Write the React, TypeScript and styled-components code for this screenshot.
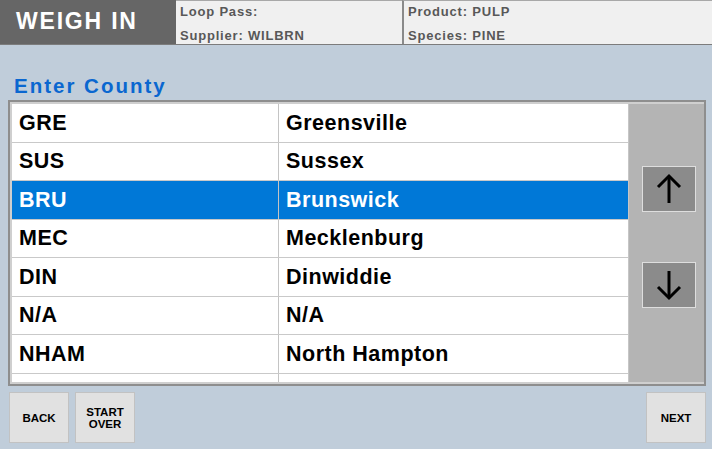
import React, { useState } from 'react';
import styled, { createGlobalStyle } from 'styled-components';

const GlobalStyle = createGlobalStyle`
  html, body {
    margin: 0;
    padding: 0;
    width: 712px;
    height: 449px;
    overflow: hidden;
    background: #c0cdda;
    font-family: 'Liberation Sans', Arial, sans-serif;
  }
  * { box-sizing: border-box; }
`;

interface County {
  code: string;
  name: string;
}

const counties: County[] = [
  { code: 'GRE', name: 'Greensville' },
  { code: 'SUS', name: 'Sussex' },
  { code: 'BRU', name: 'Brunswick' },
  { code: 'MEC', name: 'Mecklenburg' },
  { code: 'DIN', name: 'Dinwiddie' },
  { code: 'N/A', name: 'N/A' },
  { code: 'NHAM', name: 'North Hampton' },
];

const Screen = styled.div`
  width: 712px;
  height: 449px;
  display: flex;
  flex-direction: column;
  background: #c0cdda;
`;

const Header = styled.div`
  display: flex;
  height: 45px;
  border-bottom: 1px solid #7c7c7c;
`;

const TitleBlock = styled.div`
  width: 176px;
  background: #666666;
  display: flex;
  align-items: center;
  padding: 0 0 2px 16px;
  color: #ffffff;
  font-size: 23px;
  font-weight: 700;
  letter-spacing: 1.8px;
`;

const InfoCell = styled.div<{ $width: number; $divider?: boolean }>`
  width: ${({ $width }) => $width}px;
  background: #f0f0f0;
  border-top: 1px solid #a8a8a8;
  border-left: ${({ $divider }) => ($divider ? '2px solid #8a8a8a' : 'none')};
  display: flex;
  flex-direction: column;
  gap: 9px;
  padding: 3px 0 0 4px;
`;

const InfoLine = styled.div`
  font-size: 13px;
  line-height: 15px;
  font-weight: 700;
  color: #585858;
  letter-spacing: 0.8px;
`;

const Body = styled.div`
  flex: 1;
  display: flex;
  flex-direction: column;
  padding: 0 6px 0 8px;
`;

const SectionTitle = styled.h2`
  margin: 0;
  padding: 30px 0 0 6px;
  height: 55px;
  font-size: 20.5px;
  line-height: 22px;
  font-weight: 700;
  color: #0a67d0;
  letter-spacing: 2px;
`;

const ListFrame = styled.div`
  height: 286px;
  border: 2px solid #8e8e8e;
  padding: 2px 0 2px 2px;
  background: #cfcfcf;
  display: flex;
`;

const Rows = styled.div`
  flex: 1;
  background: #ffffff;
  overflow: hidden;
`;

const Row = styled.div<{ $selected?: boolean }>`
  display: grid;
  grid-template-columns: 267px 1fr;
  height: 38.5px;
  border-bottom: 1px solid #c9c9c9;
  background: ${({ $selected }) => ($selected ? '#0078d7' : '#ffffff')};
  color: ${({ $selected }) => ($selected ? '#ffffff' : '#000000')};
  cursor: pointer;
`;

const Cell = styled.div<{ $first?: boolean }>`
  display: flex;
  align-items: center;
  padding-left: 7px;
  padding-top: 1px;
  font-size: 21.5px;
  font-weight: 700;
  letter-spacing: 0.5px;
  border-right: ${({ $first }) => ($first ? '1px solid #c4c4c4' : 'none')};
  white-space: nowrap;
`;

const ScrollPanel = styled.div`
  width: 76px;
  background: #b4b4b4;
  border-left: 1px solid #c6c6c6;
  display: flex;
  flex-direction: column;
  align-items: flex-start;
  padding: 62px 0 0 13px;
  gap: 50px;
`;

const ArrowButton = styled.button`
  width: 54px;
  height: 46px;
  padding: 0;
  background: #8b8b8b;
  border: 1px solid #dedede;
  display: flex;
  align-items: center;
  justify-content: center;
  cursor: pointer;
`;

const Footer = styled.div`
  display: flex;
  gap: 6px;
  padding: 6px 0 0 1px;
`;

const NavButton = styled.button<{ $push?: boolean }>`
  width: 60px;
  height: 51px;
  margin-left: ${({ $push }) => ($push ? 'auto' : '0')};
  background: #e1e1e1;
  border: 1px solid #c2c2c2;
  font-family: 'Liberation Sans', Arial, sans-serif;
  font-size: 11.5px;
  line-height: 12px;
  font-weight: 700;
  color: #000000;
  padding: 0;
  cursor: pointer;
`;

const Arrow: React.FC<{ down?: boolean }> = ({ down }) => (
  <svg width="26" height="32" viewBox="0 0 26 32" style={{ transform: down ? 'rotate(180deg)' : undefined }}>
    <path d="M13 3 V30" stroke="#000" strokeWidth="3" fill="none" />
    <path d="M2 14 L13 3 L24 14" stroke="#000" strokeWidth="3" fill="none" strokeLinejoin="miter" />
  </svg>
);

export default function App() {
  const [selected, setSelected] = useState(2);

  return (
    <Screen>
      <GlobalStyle />
      <Header>
        <TitleBlock>WEIGH IN</TitleBlock>
        <InfoCell $width={226}>
          <InfoLine>Loop Pass:</InfoLine>
          <InfoLine>Supplier: WILBRN</InfoLine>
        </InfoCell>
        <InfoCell $width={310} $divider>
          <InfoLine>Product: PULP</InfoLine>
          <InfoLine>Species: PINE</InfoLine>
        </InfoCell>
      </Header>
      <Body>
        <SectionTitle>Enter County</SectionTitle>
        <ListFrame>
          <Rows>
            {counties.map((c, i) => (
              <Row key={c.code} $selected={i === selected} onClick={() => setSelected(i)}>
                <Cell $first>{c.code}</Cell>
                <Cell>{c.name}</Cell>
              </Row>
            ))}
            <Row>
              <Cell $first />
              <Cell />
            </Row>
          </Rows>
          <ScrollPanel>
            <ArrowButton aria-label="Scroll up">
              <Arrow />
            </ArrowButton>
            <ArrowButton aria-label="Scroll down">
              <Arrow down />
            </ArrowButton>
          </ScrollPanel>
        </ListFrame>
        <Footer>
          <NavButton>BACK</NavButton>
          <NavButton>
            START
            <br />
            OVER
          </NavButton>
          <NavButton $push>NEXT</NavButton>
        </Footer>
      </Body>
    </Screen>
  );
}
